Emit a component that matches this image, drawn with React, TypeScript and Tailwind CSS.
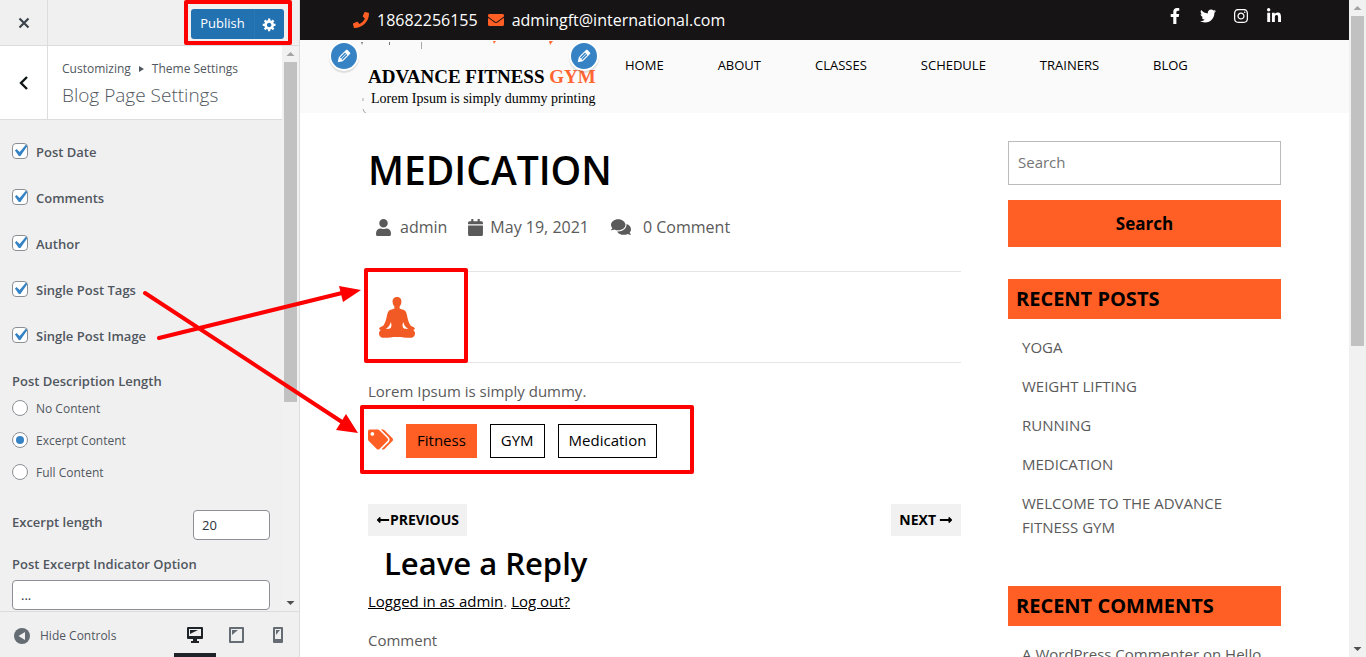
import { useState, type ReactNode } from "react";
import {
  FaCalendar,
  FaComments,
  FaEnvelope,
  FaFacebookF,
  FaInstagram,
  FaLinkedinIn,
  FaLongArrowAltLeft,
  FaLongArrowAltRight,
  FaPhone,
  FaTags,
  FaTwitter,
  FaUser,
} from "react-icons/fa";

const toggles = ["Post Date", "Comments", "Author", "Single Post Tags", "Single Post Image"];
const lengths = ["No Content", "Excerpt Content", "Full Content"];
const navItems = ["HOME", "ABOUT", "CLASSES", "SCHEDULE", "TRAINERS", "BLOG"];
const recentPosts = ["YOGA", "WEIGHT LIFTING", "RUNNING", "MEDICATION", "WELCOME TO THE ADVANCE FITNESS GYM"];

function ScrollTrack({ thumb }: { thumb: string }) {
  return (
    <div aria-hidden="true" className="flex w-[17px] shrink-0 flex-col items-center bg-[#f1f1f1]">
      <svg className="h-4 w-[17px] shrink-0" viewBox="0 0 17 16">
        <path d="M8.5 6L12.5 10H4.5z" fill="#a3a3a3" />
      </svg>
      <div className={`w-[13px] bg-[#c1c1c1] ${thumb}`} />
      <svg className="mt-auto h-4 w-[17px] shrink-0" viewBox="0 0 17 16">
        <path d="M4.5 6H12.5L8.5 10z" fill="#505050" />
      </svg>
    </div>
  );
}

function Highlight({ className }: { className: string }) {
  return <div aria-hidden="true" className={`pointer-events-none absolute z-10 rounded-xs border-4 border-[#ff0000] ${className}`} />;
}

function EditShortcut({ label, className }: { label: string; className: string }) {
  return (
    <button
      type="button"
      aria-label={label}
      className={`absolute flex size-[30px] items-center justify-center rounded-full border-2 border-white bg-[#3582c4] shadow-[0_2px_1px_rgba(60,67,74,0.15)] ${className}`}
    >
      <svg viewBox="0 0 20 20" className="size-[18px]" fill="#fff">
        <path d="M13.89 3.39l2.71 2.72c.46.46.42 1.24.03 1.64l-8.01 8.02-5.56 1.16 1.16-5.58s7.6-7.63 7.99-8.03c.39-.39 1.22-.39 1.68.07zm-2.73 2.79l-5.59 5.61 1.11 1.11 5.54-5.65zm-2.97 8.23l5.58-5.6-1.07-1.08-5.59 5.6z" />
      </svg>
    </button>
  );
}

function Controls() {
  const [checked, setChecked] = useState<string[]>(toggles);
  const [length, setLength] = useState("Excerpt Content");
  const flip = (name: string) =>
    setChecked((list) => (list.includes(name) ? list.filter((n) => n !== name) : [...list, name]));

  return (
    <div className="flex flex-col px-3 pt-2 text-[13px] text-[#50575e]">
      {toggles.map((name) => (
        <label key={name} className="flex h-[46px] items-center gap-2 font-semibold">
          <span className="relative flex size-4">
            <input
              type="checkbox"
              checked={checked.includes(name)}
              onChange={() => flip(name)}
              className="peer size-4 appearance-none rounded-[4px] border border-[#8c8f94] bg-white"
            />
            <svg viewBox="0 0 20 20" className="pointer-events-none absolute -top-1 -left-1 hidden size-6 peer-checked:block" fill="#3582c4">
              <path d="M14.83 4.89l1.34.94-5.81 8.38H9.02L5.78 9.67l1.34-1.25 2.57 2.4z" />
            </svg>
          </span>
          <span className="pt-1">{name}</span>
        </label>
      ))}
      <fieldset className="flex flex-col">
        <legend className="flex h-[34px] items-center pt-3.5 font-semibold">Post Description Length</legend>
        {lengths.map((name) => (
          <label key={name} className="flex h-8 items-center gap-2 text-xs">
            <span className="relative flex size-4">
              <input
                type="radio"
                name="description-length"
                checked={length === name}
                onChange={() => setLength(name)}
                className="peer size-4 appearance-none rounded-full border border-[#8c8f94] bg-white"
              />
              <span className="pointer-events-none absolute top-1 left-1 hidden size-2 rounded-full bg-[#3582c4] peer-checked:block" />
            </span>
            <span className="pt-0.5">{name}</span>
          </label>
        ))}
      </fieldset>
      <div className="mt-[22px] flex justify-between">
        <label htmlFor="excerpt-length" className="pt-[3px] font-semibold">
          Excerpt length
        </label>
        <input
          id="excerpt-length"
          defaultValue="20"
          className="h-[30px] w-[77px] rounded-[4px] border border-[#8c8f94] bg-white px-2 text-[13px] text-[#2c3338]"
        />
      </div>
      <label htmlFor="excerpt-indicator" className="mt-2 flex h-8 items-center pt-0.5 font-semibold">
        Post Excerpt Indicator Option
      </label>
      <input
        id="excerpt-indicator"
        defaultValue="..."
        className="h-[30px] rounded-[4px] border border-[#8c8f94] bg-white px-2 text-[13px] text-[#2c3338]"
      />
    </div>
  );
}

function Customizer() {
  return (
    <aside className="flex w-[300px] shrink-0 flex-col border-r border-[#dcdcde] bg-[#f0f0f1] font-['Open_Sans',sans-serif]">
      <div className="flex h-[46px] shrink-0 items-center border-b border-[#dcdcde]">
        <button type="button" aria-label="Close" className="flex h-full w-12 items-center justify-center border-r border-[#dcdcde]">
          <svg viewBox="0 0 12 12" className="size-3" stroke="#3c434a" strokeWidth="2.2">
            <path d="M1.5 1.5l9 9M10.5 1.5l-9 9" />
          </svg>
        </button>
        <div className="relative mt-[3px] mr-[15px] ml-auto flex h-[30px] rounded-[3px] bg-[#2271b1] text-[13px] text-white">
          <button type="button" className="w-[63px]">Publish</button>
          <button type="button" aria-label="Publish settings" className="flex w-[30px] items-center justify-center border-l border-[#2a77b5]">
            <svg viewBox="0 0 20 20" className="size-[15px]" fill="#fff">
              <path d="M18 12h-2.18c-.17.7-.44 1.35-.81 1.93l1.54 1.54-2.1 2.1-1.54-1.54c-.58.36-1.23.63-1.91.79V19H8v-2.18c-.68-.16-1.33-.43-1.91-.79l-1.54 1.54-2.12-2.12 1.54-1.54c-.36-.58-.63-1.23-.79-1.91H1V9.03h2.17c.16-.7.44-1.35.8-1.94L2.43 5.55l2.1-2.1 1.54 1.54c.58-.37 1.24-.64 1.93-.81V2h3v2.18c.68.16 1.33.43 1.91.79l1.54-1.54 2.12 2.12-1.54 1.54c.36.59.64 1.24.8 1.94H18V12zm-8.5 1.5c1.66 0 3-1.34 3-3s-1.34-3-3-3-3 1.34-3 3 1.34 3 3 3z" />
            </svg>
          </button>
          <Highlight className="-top-[9px] -right-2 -bottom-[6px] -left-[7px]" />
        </div>
      </div>
      <div className="flex min-h-0 flex-1">
        <div className="min-w-0 flex-1 overflow-hidden">
          <div className="flex h-[74px] border-b border-[#dcdcde] bg-white">
            <button type="button" aria-label="Back" className="flex w-12 items-center justify-center border-r border-[#dcdcde]">
              <svg viewBox="0 0 9 14" className="h-3.5 w-[9px]" fill="none" stroke="#101517" strokeWidth="2.4">
                <path d="M8 1L2 7l6 6" />
              </svg>
            </button>
            <div className="flex flex-col justify-center pb-px pl-3.5 text-[#50575e]">
              <p className="flex items-center gap-2 text-xs leading-[26px]">
                Customizing
                <svg viewBox="0 0 5 6" className="h-1.5 w-[5px]" fill="#50575e">
                  <path d="M0 0l5 3-5 3z" />
                </svg>
                Theme Settings
              </p>
              <h1 className="text-[19px] leading-[26px] font-light">Blog Page Settings</h1>
            </div>
          </div>
          <Controls />
        </div>
        <ScrollTrack thumb="h-[340px]" />
      </div>
      <div className="flex h-[46px] shrink-0 items-stretch border-t border-[#dcdcde] text-xs text-[#50575e]">
        <button type="button" className="flex items-center gap-2.5 pt-0.5 pl-3.5">
          <svg viewBox="0 0 16 16" className="size-4">
            <circle cx="8" cy="8" r="8" fill="#656c73" />
            <path d="M11 4v8L4.500 8z" fill="#f0f0f1" />
          </svg>
          Hide Controls
        </button>
        <div className="ml-auto flex">
          <button type="button" aria-label="Desktop preview" className="flex w-[42px] items-center justify-center border-b-4 border-[#1d2327] pt-1">
            <svg viewBox="0 0 16 16" className="size-4" fill="#1d2327">
              <path fillRule="evenodd" d="M1 0h14a1 1 0 0 1 1 1v10a1 1 0 0 1-1 1h-5v2h2v2H4v-2h2v-2H1a1 1 0 0 1-1-1V1a1 1 0 0 1 1-1zM2 2v7h12V2z" />
              <path d="M3 3h8L3 7z" />
            </svg>
          </button>
          <button type="button" aria-label="Tablet preview" className="flex w-[41px] items-center justify-center">
            <svg viewBox="0 0 15 16" className="h-4 w-[15px]" fill="#656c73">
              <path fillRule="evenodd" d="M1 0h13a1 1 0 0 1 1 1v14a1 1 0 0 1-1 1H1a1 1 0 0 1-1-1V1a1 1 0 0 1 1-1zM2 2v12h11V2z" />
              <path d="M3 3h6L3 8z" />
            </svg>
          </button>
          <button type="button" aria-label="Mobile preview" className="flex w-[42px] items-center justify-center">
            <svg viewBox="0 0 10 16" className="h-4 w-2.5" fill="#656c73">
              <path fillRule="evenodd" d="M1 0h8a1 1 0 0 1 1 1v14a1 1 0 0 1-1 1H1a1 1 0 0 1-1-1V1a1 1 0 0 1 1-1zM2 2v10h6V2z" />
              <path d="M3 3h4L3 8z" />
            </svg>
          </button>
        </div>
      </div>
    </aside>
  );
}

function SiteHeader() {
  return (
    <header>
      <div className="h-10 bg-[#171415] text-white">
        <div className="mx-auto flex h-full w-full max-w-[943px] items-center pr-3.5 text-base">
          <FaPhone className="size-4 text-[#ff5e24]" />
          <a href="tel:18682256155" className="ml-2">18682256155</a>
          <FaEnvelope className="ml-2.5 size-4 text-[#ff5e24]" />
          <a href="mailto:admingft@international.com" className="ml-2">admingft@international.com</a>
          <div className="ml-auto flex items-center gap-[17px] pb-2">
            <a href="#facebook" aria-label="Facebook"><FaFacebookF className="size-4" /></a>
            <a href="#twitter" aria-label="Twitter"><FaTwitter className="size-4" /></a>
            <a href="#instagram" aria-label="Instagram"><FaInstagram className="size-4" /></a>
            <a href="#linkedin" aria-label="LinkedIn"><FaLinkedinIn className="size-4" /></a>
          </div>
        </div>
      </div>
      <div className="h-[73px] bg-[#fafafa]">
        <div className="relative mx-auto flex h-full w-full max-w-[913px]">
          <svg aria-hidden="true" viewBox="0 0 200 73" className="pointer-events-none absolute top-0 -left-2 h-[73px] w-[200px]">
            <path d="M1 2h2l-1 3zM29 2h1v3h-1z" fill="#777" />
            <path d="M61 2h1v7h-1z" fill="#aaa" />
            <path d="M133 1h3l-2 3zM189 1h4l-3 4z" fill="#ff6b35" />
            <path d="M3 58v3M3 69q1 4 3 4" fill="none" stroke="#aaa" />
          </svg>
          <EditShortcut label="Edit logo" className="top-[1px] -left-[39px]" />
          <EditShortcut label="Edit menu" className="top-[1px] left-[201px]" />
          <a href="#home" className="w-[257px] shrink-0 pt-[25px] font-['Liberation_Serif',serif] text-black">
            <span className="block text-[19px] leading-6 font-bold whitespace-nowrap">
              ADVANCE FITNESS <span className="text-[#ff6633]">GYM</span>
            </span>
            <span className="block pl-[3px] text-sm leading-5 whitespace-nowrap">Lorem Ipsum is simply dummy printing</span>
          </a>
          <nav className="flex gap-[54px] pt-[15px] text-[13px] leading-5 font-medium text-black">
            {navItems.map((item) => (
              <a key={item} href={`#${item.toLowerCase()}`}>{item}</a>
            ))}
          </nav>
        </div>
      </div>
    </header>
  );
}

function Meditation() {
  return (
    <svg role="img" aria-label="Meditation" viewBox="0 0 36 41" className="h-[41px] w-9" fill="#f15a24">
      <path d="M18 0c3.200 0 4.600 2.200 4.400 5-.1 1.800-.8 3.300-1.800 4.400v2.100c1.300 1 4.300.8 5.700 2.500 1.200 1.500 1.600 4 2.100 6.200.7 3.300 1.600 6.200 3.200 8.400 1 1.300 4 1.300 4.200 3 .1 1-1 1.300-1.600 1.500 1.200.8 1.800 1.800 1.800 3.300 0 3-2 4.400-5.300 4.400-4.200 0-7.500-.8-12.700-.8s-8.500.8-12.700.8C2 40.800 0 39.400 0 36.400c0-1.500.6-2.500 1.800-3.300-.6-.2-1.700-.5-1.600-1.500.2-1.700 3.200-1.700 4.200-3C6 26.400 6.900 23.500 7.600 20.200c.5-2.200.9-4.700 2.100-6.200 1.400-1.700 4.400-1.500 5.700-2.500V9.400c-1-1.100-1.700-2.600-1.800-4.400C13.400 2.200 14.800 0 18 0z" />
      <path d="M11.800 25c-.7 3-2.300 5.200-5 6.800 1.600.3 3.800.1 4.800-.8 1-1 1.200-3.600.2-6zM24.200 25c.7 3 2.300 5.200 5 6.800-1.600.3-3.800.1-4.800-.8-1-1-1.200-3.600-.2-6z" fill="#fff" />
    </svg>
  );
}

function Tag({ active, children }: { active?: boolean; children: ReactNode }) {
  return (
    <a
      href="#tag"
      className={`flex h-[34px] items-center border px-2.5 pb-0.5 text-black ${active ? "border-[#ff5e24] bg-[#ff5e24]" : "border-black"}`}
    >
      {children}
    </a>
  );
}

function Post() {
  return (
    <article className="text-[15px] text-[#5a5a5a]">
      <h2 className="pb-1 text-[39px] leading-[44px] font-semibold text-black">MEDICATION</h2>
      <div className="mt-[19px] flex h-6 items-center pl-[7px] text-base">
        <FaUser className="size-[17px]" />
        <span className="ml-2">admin</span>
        <FaCalendar className="ml-5 size-[17px]" />
        <span className="ml-1.5">May 19, 2021</span>
        <FaComments className="ml-[22px] size-5" />
        <span className="ml-3">0 Comment</span>
      </div>
      <div className="relative mt-8 flex h-[92px] items-center border-y border-[#e5e5e5] pl-[11px]">
        <Meditation />
        <Highlight className="-top-1 -left-1 h-[95px] w-[104px]" />
      </div>
      <p className="mt-4 leading-6">Lorem Ipsum is simply dummy.</p>
      <div className="relative mt-[21px] flex items-center">
        <FaTags className="mr-[13px] mb-1 size-[25px] text-[#ff5e24]" />
        <div className="flex gap-[13px]">
          <Tag active>Fitness</Tag>
          <Tag>GYM</Tag>
          <Tag>Medication</Tag>
        </div>
        <Highlight className="-top-[19px] -left-2 h-[69px] w-[334px]" />
      </div>
      <div className="mt-[46px] flex justify-between text-sm font-bold text-black">
        <a href="#previous" className="flex h-8 items-center bg-[#f1f1f1] px-2">
          <FaLongArrowAltLeft className="size-3.5" />
          PREVIOUS
        </a>
        <a href="#next" className="flex h-8 items-center gap-[3px] bg-[#f1f1f1] px-2">
          NEXT
          <FaLongArrowAltRight className="size-3.5" />
        </a>
      </div>
      <h3 className="mt-2 pl-4 text-[31px] leading-[38px] font-semibold text-black">Leave a Reply</h3>
      <p className="mt-[7px] leading-6">
        <a href="#profile" className="text-black underline">Logged in as admin</a>.{" "}
        <a href="#logout" className="text-black underline">Log out?</a>
      </p>
      <label htmlFor="comment" className="mt-[15px] block leading-6">Comment</label>
      <textarea id="comment" className="mt-2 block h-40 w-full border border-[#bbb]" />
    </article>
  );
}

function SiteSidebar() {
  return (
    <div className="text-[15px] text-[#5a5a5a]">
      <form className="flex flex-col gap-[15px]" onSubmit={(e) => e.preventDefault()}>
        <input
          type="search"
          aria-label="Search"
          placeholder="Search"
          className="h-11 w-full border border-[#bbb] bg-white px-[9px] pb-0.5 placeholder:text-[#757575]"
        />
        <button type="submit" className="h-[47px] bg-[#ff5e24] text-[17px] font-bold text-black">Search</button>
      </form>
      <h3 className="mt-8 flex h-10 items-center bg-[#ff5e24] px-2 text-xl font-bold text-black">RECENT POSTS</h3>
      <ul className="mt-4 flex flex-col gap-[15px] pr-3.5 pl-3.5 leading-6">
        {recentPosts.map((post) => (
          <li key={post}><a href="#post">{post}</a></li>
        ))}
      </ul>
      <h3 className="mt-[47px] flex h-10 items-center bg-[#ff5e24] px-2 text-xl font-bold text-black">RECENT COMMENTS</h3>
      <p className="mt-4 pl-3.5 leading-6">
        A WordPress Commenter on Hello
      </p>
    </div>
  );
}

function Arrows() {
  return (
    <svg aria-hidden="true" className="pointer-events-none absolute top-0 left-0 z-20 h-[657px] w-[400px]" viewBox="0 0 400 657" fill="#ff0000" stroke="#ff0000">
      <path d="M145 293L342 422M159 338L342 293" strokeWidth="4" strokeLinecap="round" />
      <path d="M358 433L336 430L346 414zM361 290L343 302L339 286z" stroke="none" />
    </svg>
  );
}

export default function App() {
  return (
    <div className="relative flex h-screen overflow-hidden bg-white">
      <Customizer />
      <div className="min-w-0 flex-1 overflow-hidden font-['Open_Sans',sans-serif]">
        <SiteHeader />
        <main className="mx-auto grid w-full max-w-[913px] grid-cols-[minmax(0,1fr)_273px] gap-[47px] pt-7">
          <div className="pt-[7px]"><Post /></div>
          <SiteSidebar />
        </main>
      </div>
      <ScrollTrack thumb="h-[330px]" />
      <Arrows />
    </div>
  );
}
